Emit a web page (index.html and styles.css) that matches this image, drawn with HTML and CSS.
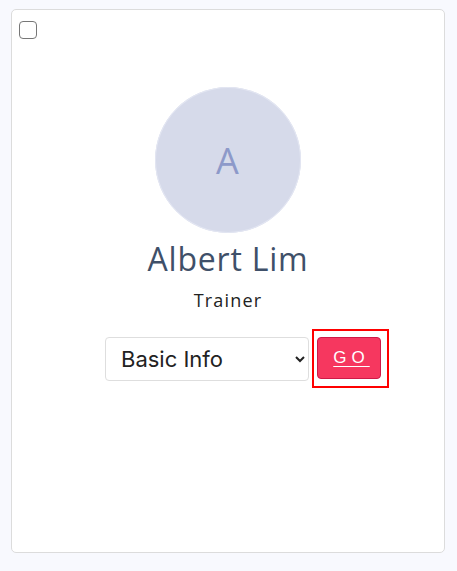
FILE: index.html
```html
<!DOCTYPE html>
<html>
<head>
<meta charset="utf-8">
<link rel="stylesheet" href="styles.css">
</head>
<body>
<div class="card">
  <input type="checkbox" class="check">
  <div class="profile">
    <div class="avatar">A</div>
    <div class="name">Albert Lim</div>
    <div class="role">Trainer</div>
    <div class="actions">
      <select class="picker">
        <option>Basic Info</option>
      </select>
      <span class="focus-box"><a class="go" href="#">GO</a></span>
    </div>
  </div>
</div>
</body>
</html>
```
FILE: styles.css
```css
html, body {
  margin: 0;
  background: #f8f9fe;
}
body {
  padding: 9px 12px 18px 11px;
  font-family: "Open Sans", "Liberation Sans", sans-serif;
}
.card {
  box-sizing: border-box;
  width: 434px;
  height: 544px;
  background: #fff;
  border: 1px solid #dcdcdc;
  border-radius: 5px;
  padding: 11px 7px;
}
.check {
  display: block;
  margin: 0;
  width: 18px;
  height: 18px;
  appearance: none;
  border: 1.5px solid #777;
  border-radius: 4px;
  box-sizing: border-box;
  background: #fff;
}
.profile {
  display: flex;
  flex-direction: column;
  align-items: center;
  margin-top: 48px;
}
.avatar {
  width: 146px;
  height: 146px;
  border-radius: 50%;
  background: #d6daea;
  box-shadow: 0 0 0 1px #e3e6f2 inset;
  display: flex;
  align-items: center;
  justify-content: center;
  color: #8d99c9;
  font-size: 36px;
  font-family: "Open Sans", sans-serif;
  font-weight: 400;
  letter-spacing: 1px;
}
.name {
  margin-top: 7px;
  font-size: 32px;
  color: #3f5069;
  letter-spacing: 0.8px;
  line-height: 38px;
}
.role {
  margin-top: 10px;
  font-size: 18px;
  color: #222;
  letter-spacing: 1.2px;
  line-height: 24px;
}
.actions {
  display: flex;
  align-items: flex-start;
  margin-top: 17px;
  margin-left: 38px;
}
.picker {
  box-sizing: border-box;
  width: 204px;
  height: 44px;
  margin-top: 8px;
  font-family: "Inter", "Liberation Sans", sans-serif;
  font-size: 22px;
  color: #222;
  background: #fff;
  border: 1px solid #dedede;
  border-radius: 4px;
  padding: 0 10px 0 11px;
}
.focus-box {
  display: block;
  border: 2px solid #ff0000;
  padding: 6px 6px 7px 3px;
  margin-left: 3px;
}
.go {
  display: flex;
  align-items: center;
  justify-content: center;
  box-sizing: border-box;
  width: 64px;
  height: 42px;
  background: #f6375f;
  border: 1px solid #cf1947;
  border-radius: 4px;
  color: #fff;
  font-family: "Liberation Sans", sans-serif;
  font-size: 17px;
  letter-spacing: 5px;
  padding-left: 5px;
  text-decoration: underline;
  text-underline-offset: 3px;
}
```
